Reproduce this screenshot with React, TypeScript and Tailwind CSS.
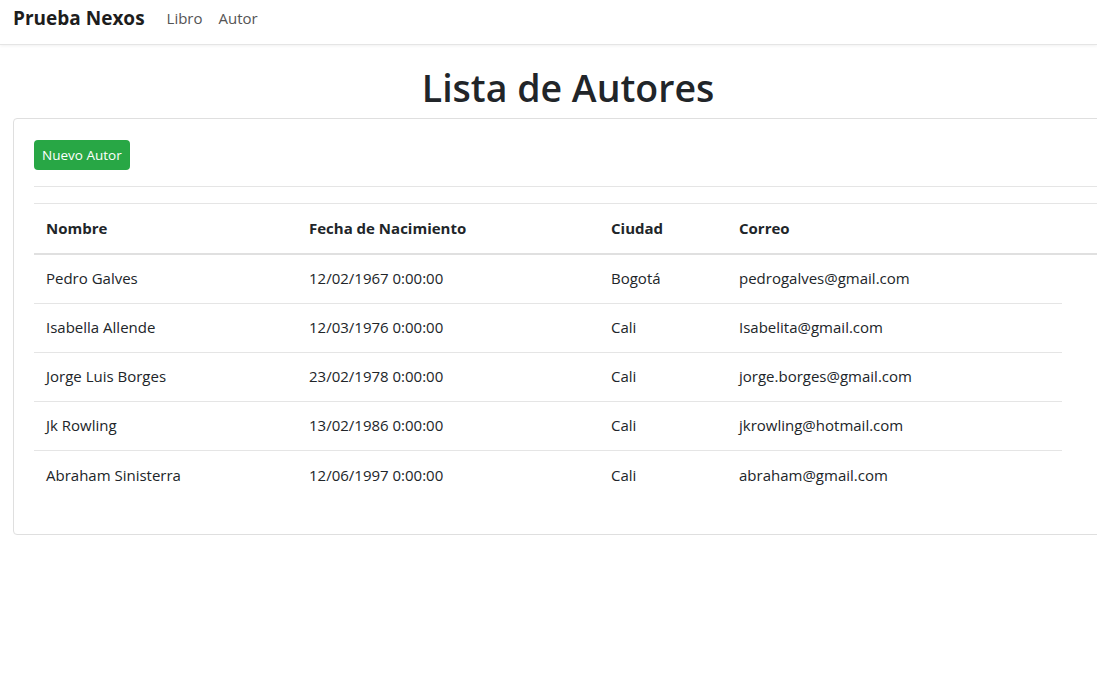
const AUTORES = [
  { nombre: 'Pedro Galves', fecha: '12/02/1967 0:00:00', ciudad: 'Bogotá', correo: 'pedrogalves@gmail.com' },
  { nombre: 'Isabella Allende', fecha: '12/03/1976 0:00:00', ciudad: 'Cali', correo: 'Isabelita@gmail.com' },
  { nombre: 'Jorge Luis Borges', fecha: '23/02/1978 0:00:00', ciudad: 'Cali', correo: 'jorge.borges@gmail.com' },
  { nombre: 'Jk Rowling', fecha: '13/02/1986 0:00:00', ciudad: 'Cali', correo: 'jkrowling@hotmail.com' },
  { nombre: 'Abraham Sinisterra', fecha: '12/06/1997 0:00:00', ciudad: 'Cali', correo: 'abraham@gmail.com' },
];

export default function App() {
  return (
    <div className="min-h-[687px] bg-white text-[#212529] overflow-hidden font-['Open_Sans',sans-serif]">
      {/* Navbar */}
      <nav className="h-[45px] flex items-center px-[13px] border-b border-[#e5e5e5] shadow-[0_1px_3px_rgba(0,0,0,0.06)]">
        <span className="text-[19px] font-bold text-[#1d1d1d] mr-[22px] -mt-[8px]">Prueba Nexos</span>
        <div className="flex gap-4 text-[15px] text-[#555] -mt-[8px]">
          <a>Libro</a>
          <a>Autor</a>
        </div>
      </nav>

      {/* Content */}
      <main className="w-[1110px] ml-[13px]">
        <h1 className="text-center text-[37.5px] font-semibold leading-[48px] mt-[19px] mb-[6px]">Lista de Autores</h1>

        <div className="border border-[#dfdfdf] rounded-[4px] px-5 pt-[21px] pb-5">
          <button className="bg-[#28a745] text-white text-[13.5px] rounded-[4px] h-[30px] px-[8px]">Nuevo Autor</button>
          <hr className="mt-4 mb-4 border-[#e5e5e5]" />

          <table className="w-full text-[15px] border-collapse mb-[14px]">
            <thead>
              <tr className="border-t border-[#e5e5e5] border-b-2 border-b-[#e0e0e0] h-[50px]">
                <th className="text-left font-bold px-3 w-[263px]">Nombre</th>
                <th className="text-left font-bold px-3 w-[302px]">Fecha de Nacimiento</th>
                <th className="text-left font-bold px-3 w-[128px]">Ciudad</th>
                <th className="text-left font-bold px-3">Correo</th>
              </tr>
            </thead>
            <tbody>
              {AUTORES.map((a, i) => (
                <tr key={a.nombre} className="h-[49px]">
                  <td colSpan={4} className="p-0">
                    <div className={'flex h-[49px] items-center w-[1028px] ' + (i < AUTORES.length - 1 ? 'border-b border-[#e5e5e5]' : '')}>
                      <span className="px-3 w-[263px]">{a.nombre}</span>
                      <span className="px-3 w-[302px]">{a.fecha}</span>
                      <span className="px-3 w-[128px]">{a.ciudad}</span>
                      <span className="px-3">{a.correo}</span>
                    </div>
                  </td>
                </tr>
              ))}
            </tbody>
          </table>
        </div>
      </main>
    </div>
  );
}
